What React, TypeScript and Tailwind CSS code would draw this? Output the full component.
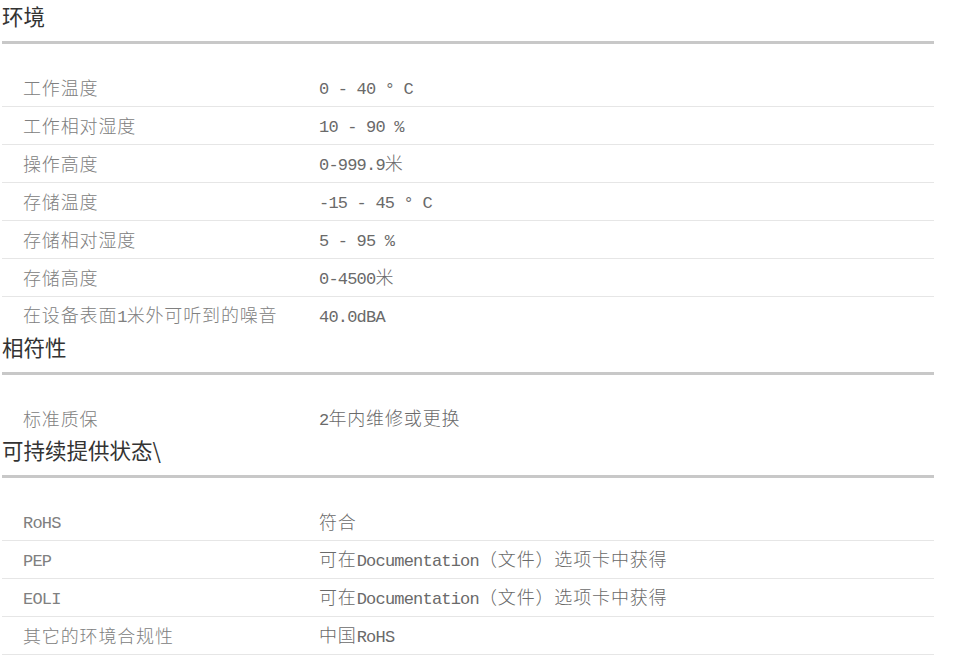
import React from "react";

type Row = [string, string];

const sections: { title: string; rows: Row[]; lastBorder: boolean }[] = [
  {
    title: "环境",
    rows: [
      ["工作温度", "0 - 40 ° C"],
      ["工作相对湿度", "10 - 90 %"],
      ["操作高度", "0-999.9米"],
      ["存储温度", "-15 - 45 ° C"],
      ["存储相对湿度", "5 - 95 %"],
      ["存储高度", "0-4500米"],
      ["在设备表面1米外可听到的噪音", "40.0dBA"],
    ],
    lastBorder: false,
  },
  {
    title: "相符性",
    rows: [["标准质保", "2年内维修或更换"]],
    lastBorder: false,
  },
  {
    title: "可持续提供状态\\",
    rows: [
      ["RoHS", "符合"],
      ["PEP", "可在Documentation（文件）选项卡中获得"],
      ["EOLI", "可在Documentation（文件）选项卡中获得"],
      ["其它的环境合规性", "中国RoHS"],
    ],
    lastBorder: true,
  },
];

function Mixed({ text }: { text: string }) {
  const parts = text.match(/[\u0000-\u00ff]+|[^\u0000-\u00ff]+/g) || [];
  return (
    <>
      {parts.map((p, i) =>
        /^[\u0000-\u00ff]+$/.test(p) ? (
          <span
            key={i}
            className="font-['Liberation_Mono',monospace] text-[17px] tracking-[-0.8px] whitespace-pre"
          >
            {p}
          </span>
        ) : (
          <span key={i} className="tracking-[0.85px] font-light">
            {p}
          </span>
        )
      )}
    </>
  );
}

export default function App() {
  return (
    <div className="w-[953px] min-h-[664px] bg-white pt-[3px] font-['Noto_Sans_CJK_SC',sans-serif]">
      <div className="ml-[2px] w-[932px]">
        {sections.map((s, si) => (
          <div key={si}>
            <h3 className="text-[21.5px] leading-[26px] text-[#333] font-normal">
              {s.title}
            </h3>
            <div className="mt-[12px] h-[3px] bg-[#c8c8c8]" />
            <div className="mt-[25px]">
              {s.rows.map((r, ri) => {
                const border = ri < s.rows.length - 1 || s.lastBorder;
                return (
                  <div
                    key={ri}
                    className={
                      border
                        ? "flex items-center h-[38px] border-b border-[#e6e6e6] text-[18px]"
                        : "flex items-center h-[37px] text-[18px]"
                    }
                  >
                    <div className="w-[317px] pl-[21px] text-[#808080] whitespace-nowrap">
                      <Mixed text={r[0]} />
                    </div>
                    <div className="text-[#6a6a6a] whitespace-nowrap">
                      <Mixed text={r[1]} />
                    </div>
                  </div>
                );
              })}
            </div>
          </div>
        ))}
      </div>
    </div>
  );
}
